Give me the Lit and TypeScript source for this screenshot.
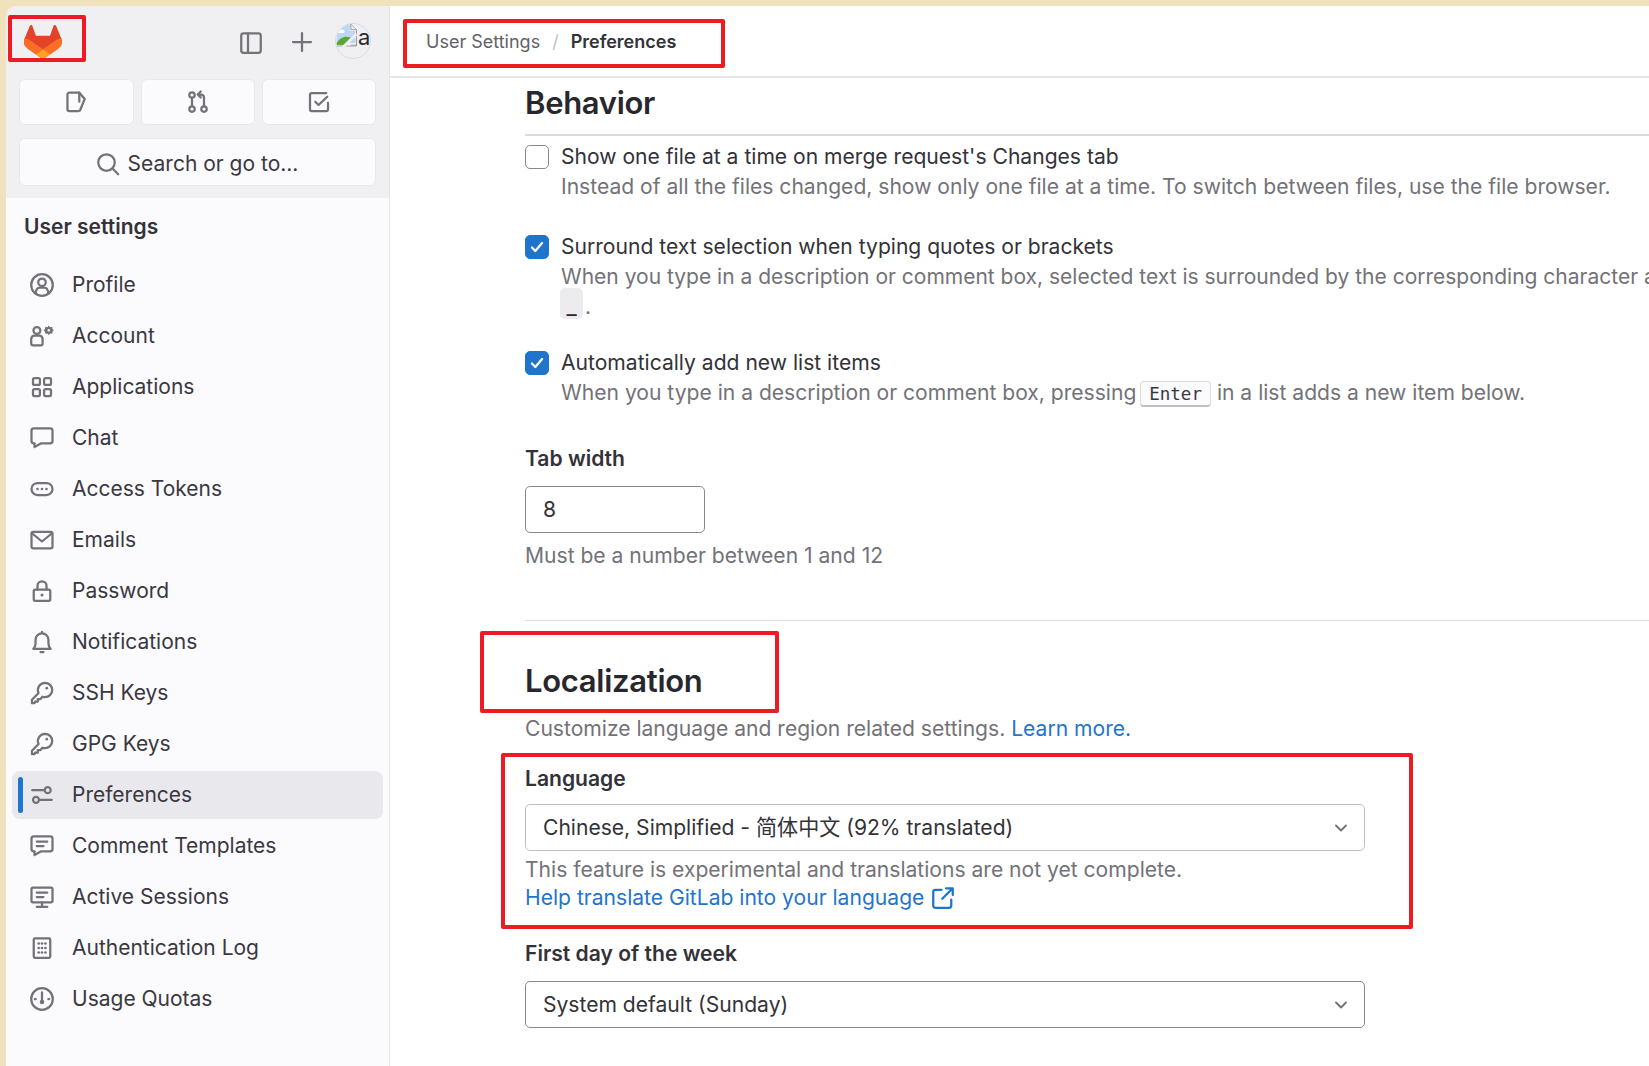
import { LitElement, html, css, svg } from "lit";
import { customElement } from "lit/decorators.js";

const ico = (body: unknown, cls = "ico") => html`<svg class=${cls} viewBox="0 0 16 16" fill="none" stroke="currentColor" stroke-width="1.5" stroke-linecap="round" stroke-linejoin="round">${body}</svg>`;

const icons: Record<string, unknown> = {
  profile: svg`<circle cx="8" cy="8" r="7.2"/><circle cx="8" cy="6.2" r="2.5"/><path d="M3.800 13.200c.3-2.200 1.600-3.400 2.700-3.400h3c1.100 0 2.400 1.200 2.700 3.400"/>`,
  account: svg`<circle cx="4.600" cy="4.300" r="2.300"/><path d="M.8 13v-2.800c0-1.400 1-2.400 2.400-2.400h2.800c1.400 0 2.400 1 2.400 2.400V13c0 .7-.5 1.200-1.200 1.200H2C1.300 14.200.8 13.700.8 13z"/><path fill="currentColor" stroke="none" d="M12.500 1l.9 1.100 1.400-.2.200 1.400.9.900-.9.900-.2 1.400-1.400-.2-.9 1.100-.9-1.100-1.400.2-.2-1.400-.9-.9.900-.9.200-1.400 1.400.2z"/><circle cx="12.500" cy="4.200" r=".8" fill="#fbfafd" stroke="none"/>`,
  apps: svg`<rect x="2" y="2" width="4.600" height="4.600" rx="1"/><rect x="9.400" y="2" width="4.600" height="4.600" rx="1"/><rect x="2" y="9.400" width="4.600" height="4.600" rx="1"/><rect x="9.400" y="9.400" width="4.600" height="4.600" rx="1"/>`,
  chat: svg`<path d="M2.500 1.500h11a1.500 1.500 0 0 1 1.500 1.500v7a1.500 1.500 0 0 1-1.500 1.500H7.500L3 14v-2.500h-.500A1.500 1.500 0 0 1 1 10V3a1.500 1.500 0 0 1 1.500-1.500z"/>`,
  token: svg`<rect x="1" y="4" width="14" height="8" rx="4"/><g fill="currentColor" stroke="none"><circle cx="5" cy="8" r=".9"/><circle cx="8" cy="8" r=".9"/><circle cx="11" cy="8" r=".9"/></g>`,
  mail: svg`<rect x="1" y="2.500" width="14" height="11" rx="1.200"/><path d="M1.300 3.500 8 9l6.700-5.500"/>`,
  lock: svg`<rect x="2.500" y="7" width="11" height="7.500" rx="1"/><path d="M5 7V4.500a3 3 0 0 1 6 0V7"/><circle cx="8" cy="10.700" r="1" fill="currentColor" stroke="none"/>`,
  bell: svg`<path d="M2.200 12.500c1.200-1 1.500-2 1.500-3.500V6.500a4.300 4.300 0 0 1 8.600 0V9c0 1.500.3 2.500 1.500 3.500z"/><path d="M7 14.700h2M8 1.300v.6"/>`,
  key: svg`<path d="M10 1.200a4.800 4.800 0 0 1 0 9.600c-.6 0-1.200-.1-1.700-.3L7 12H5.200v1.800H3.400L3 14.800H1.300v-2.300l4.400-4.500A4.800 4.800 0 0 1 10 1.200z"/><circle cx="11.200" cy="4.800" r=".9" fill="currentColor" stroke="none"/>`,
  prefs: svg`<circle cx="11.800" cy="4.800" r="2"/><path d="M1.500 4.800h8"/><circle cx="4" cy="11.200" r="2"/><path d="M6.500 11.200h8"/>`,
  comment: svg`<path d="M2.500 1.500h11a1.500 1.500 0 0 1 1.500 1.500v7a1.500 1.500 0 0 1-1.500 1.500H7.500L3 14v-2.500h-.500A1.500 1.500 0 0 1 1 10V3a1.500 1.500 0 0 1 1.500-1.500z"/><path d="M4.500 5h7M4.500 8h4.500"/>`,
  monitor: svg`<rect x="1" y="1.800" width="14" height="9.700" rx="1"/><path d="M4.500 5h7M4.500 8h4.500M8 11.500v3M4.500 14.500h7"/>`,
  log: svg`<rect x="2.500" y="1.500" width="11" height="13" rx=".8"/><g fill="currentColor" stroke="none"><circle cx="5.800" cy="5" r=".9"/><circle cx="5.800" cy="8" r=".9"/><circle cx="5.800" cy="11" r=".9"/><circle cx="8" cy="5" r=".9"/><circle cx="8" cy="8" r=".9"/><circle cx="8" cy="11" r=".9"/><circle cx="10.300" cy="5" r=".9"/><circle cx="10.300" cy="8" r=".9"/><circle cx="10.300" cy="11" r=".9"/></g>`,
  quota: svg`<circle cx="8" cy="8" r="7.200"/><path d="M8 3.500v6M3.200 8h.6M12.200 8h.6"/><circle cx="8" cy="10" r="1.500" fill="currentColor" stroke="none"/>`,
  panel: svg`<rect x="1.500" y="1.500" width="13" height="13" rx="1.500"/><path d="M6 1.500v13"/>`,
  plus: svg`<path d="M8 2v12M2 8h12"/>`,
  issue: svg`<path d="M3.500 1.800h6.700l3.600 4.200-3 7.300a1.200 1.200 0 0 1-1 .7H3.500a1.200 1.200 0 0 1-1.200-1.200V3a1.200 1.200 0 0 1 1.200-1.200z"/><path d="M10.200 1.800v6"/>`,
  mr: svg`<circle cx="4" cy="3.300" r="1.800"/><circle cx="4" cy="12.700" r="1.800"/><circle cx="12" cy="12.700" r="1.800"/><path d="M4 5.200v5.600M12 10.800V5a2 2 0 0 0-2-2H8M9.800 1 7.800 3l2 2"/>`,
  todo: svg`<path d="M14 8.500v4.300a1.200 1.200 0 0 1-1.200 1.200H3.200A1.200 1.200 0 0 1 2 12.800V3.200A1.200 1.200 0 0 1 3.200 2h9.600"/><path d="m5.500 7.800 2.200 2.200 5.800-5.500"/>`,
  search: svg`<circle cx="7" cy="7" r="5.500"/><path d="m11.200 11.200 3.600 3.600"/>`,
  chev: svg`<path d="m4 6 4 4 4-4"/>`,
  ext: svg`<path d="M7 2.500H3a1.500 1.500 0 0 0-1.500 1.500v9A1.500 1.500 0 0 0 3 14.500h9a1.500 1.500 0 0 0 1.500-1.500V9"/><path d="M10 1.500h4.500V6M14.300 1.700 7.500 8.500"/>`,
};

const nav: [string, string][] = [
  ["profile", "Profile"], ["account", "Account"], ["apps", "Applications"], ["chat", "Chat"],
  ["token", "Access Tokens"], ["mail", "Emails"], ["lock", "Password"], ["bell", "Notifications"],
  ["key", "SSH Keys"], ["key", "GPG Keys"], ["prefs", "Preferences"], ["comment", "Comment Templates"],
  ["monitor", "Active Sessions"], ["log", "Authentication Log"], ["quota", "Usage Quotas"],
];

@customElement("app-root")
export class AppRoot extends LitElement {
  static styles = css`
    :host { display: block; }
    * { box-sizing: border-box; }
    .page { position: relative; width: 1649px; height: 1066px; overflow: hidden; background: #efe2bd; padding: 6px 0 0 6px; display: flex; font-family: Inter, "Noto Sans CJK SC", sans-serif; font-size: 21px; line-height: 30px; color: #3a383f; }
    .side { width: 384px; flex: none; background: #fbfafd; border-right: 1px solid #e4e4e7; border-top-left-radius: 10px; overflow: hidden; }
    .top { background: #f0f0f3; height: 192px; padding: 0 13px; }
    .bar { height: 73px; display: flex; align-items: center; padding: 0 5px; color: #737278; }
    .logo { width: 38px; height: 34px; flex: none; margin-top: -1px; }
    .panel { width: 24px; height: 24px; margin-left: auto; }
    .plus { width: 24px; height: 24px; margin: -1px 0 0 27px; }
    .bar .ico { width: 24px; height: 24px; }
    .avatar { width: 36px; height: 36px; margin: -4px 0 0 21px; border-radius: 50%; border: 1px solid #dcdcde; overflow: hidden; flex: none; display: flex; color: #28272d; font-size: 22px; line-height: 26px; }
    .avatar svg { width: 22px; height: 24px; flex: none; margin-left: -1px; margin-top: -1px; }
    .avatar span { margin-left: 1px; }
    .btns { display: grid; grid-template-columns: 114.500px 114px 114.500px; justify-content: space-between; }
    .btn { height: 46px; background: #fbfafd; border: 1px solid #e9e9ec; border-radius: 6px; display: flex; align-items: center; justify-content: center; color: #737278; }
    .btn .ico { width: 24px; height: 24px; }
    .search { margin-top: 13px; height: 48px; padding: 3px 1px 0 0; gap: 8px; color: #3a383f; font-size: 21px; }
    .search .ico { color: #737278; }
    .title { margin: 14px 0 19px 18px; font-weight: 600; color: #333238; }
    .nav { padding: 0 6px; display: flex; flex-direction: column; gap: 3px; }
    .item { position: relative; height: 48px; border-radius: 8px; padding-left: 18px; display: flex; align-items: center; gap: 18px; white-space: nowrap; }
    .item .ico { width: 24px; height: 24px; flex: none; color: #737278; }
    .item.on { background: #e9e9ed; }
    .item.on::before { content: ""; position: absolute; left: 6px; top: 6px; width: 5px; height: 36px; border-radius: 3px; background: #1f75cb; }
    .main { flex: 1; min-width: 0; background: #fff; }
    .crumbs { height: 72px; border-bottom: 2px solid #e6e6e8; padding: 2px 0 0 36px; display: flex; align-items: center; gap: 12px; font-size: 18px; color: #626168; }
    .crumbs b { font-weight: 600; color: #333238; }
    .crumbs i { font-style: normal; color: #bfbfc3; }
    .content { padding-left: 135px; white-space: nowrap; font-size: 21.080px; }
    h2 { margin: 0; font-size: 31px; line-height: 50px; font-weight: 600; color: #28272d; letter-spacing: -.3px; }
    .rule { height: 2px; background: #dcdcde; margin: 6px 0 6px; }
    .row { position: relative; padding-left: 36px; color: #333238; }
    .row + .row { margin-top: 30px; }
    .row.third { margin-top: 26px; }
    .muted { color: #737278; }
    .muted.long { font-size: 21px; }
    .box { position: absolute; left: 0; top: 3px; width: 24px; height: 24px; border-radius: 5px; border: 1.500px solid #89888d; background: #fff; display: flex; align-items: center; justify-content: center; }
    .box.on { background: #1f75cb; border-color: #1f75cb; color: #fff; }
    .box svg { width: 18px; height: 18px; }
    code { display: inline-block; width: 23px; height: 31px; line-height: 36px; margin: -4px 2px 0 -1px; background: #ececef; border-radius: 5px; text-align: center; font-family: "DejaVu Sans Mono", monospace; font-size: 17px; font-weight: 700; color: #28272d; vertical-align: top; }
    kbd { display: inline-block; height: 26px; line-height: 25px; padding: 0 8px; background: #fbfafd; border: 1px solid #dcdcde; border-bottom: 2px solid #bfbfc3; border-radius: 4px; font-family: "DejaVu Sans Mono", monospace; font-size: 17.500px; color: #3a383f; margin: 0 0 0 -2px; vertical-align: 0; }
    .lab { font-weight: 600; color: #333238; }
    .tab { margin-top: 36px; }
    .input { width: 180px; height: 47px; margin-top: 12px; border: 1.500px solid #89888d; border-radius: 5px; padding-left: 17px; display: flex; align-items: center; color: #333238; }
    .hint { margin-top: 8px; }
    .rule2 { height: 1px; background: #dcdcde; margin-top: 49px; }
    .loc { margin-top: 35px; }
    .after { margin-top: 8px; }
    a { color: #1f75cb; text-decoration: none; }
    .lang { margin-top: 20px; }
    .sel { width: 840px; height: 47px; margin-top: 12px; border: 1.500px solid #89888d; border-radius: 5px; padding: 0 13px 0 17px; display: flex; align-items: center; justify-content: space-between; color: #333238; }
    .sel.light { border-color: #bfbfc3; margin-top: 10px; }
    .sel .ico { width: 20px; height: 20px; color: #737278; }
    .note { margin-top: 5px; line-height: 28px; }
    .link { display: flex; align-items: center; gap: 7px; line-height: 28px; }
    .link .ico { width: 24px; height: 24px; color: #1f75cb; }
    .first { margin-top: 27px; }
    .mark { position: absolute; border: 4px solid #ed1c24; border-radius: 2px; pointer-events: none; }
    .m1 { left: 8px; top: 15px; width: 78px; height: 47px; }
    .m2 { left: 403px; top: 19px; width: 322px; height: 49px; }
    .m3 { left: 480px; top: 631px; width: 299px; height: 82px; }
    .m4 { left: 501px; top: 753px; width: 912px; height: 176px; }
  `;

  render() {
    const check = html`<svg viewBox="0 0 16 16" fill="none" stroke="currentColor" stroke-width="2" stroke-linecap="round" stroke-linejoin="round"><path d="m3.500 8.500 3 3 6-7"/></svg>`;
    return html`
      <div class="page">
        <aside class="side">
          <div class="top">
            <div class="bar">
              <svg class="logo" viewBox="0 0 25 24" preserveAspectRatio="none"><path fill="#E24329" d="m24.507 9.5-.034-.09L21.082.562a.896.896 0 0 0-1.694.091l-2.29 7.01H7.825L5.535.653a.898.898 0 0 0-1.694-.09L.451 9.411.416 9.5a6.297 6.297 0 0 0 2.09 7.278l.012.01.03.022 5.16 3.867 2.56 1.935 1.554 1.176a1.051 1.051 0 0 0 1.268 0l1.555-1.176 2.56-1.935 5.197-3.89.014-.01A6.297 6.297 0 0 0 24.507 9.5Z"/><path fill="#FC6D26" d="m24.507 9.5-.034-.09a11.44 11.44 0 0 0-4.56 2.051l-7.447 5.632 4.742 3.584 5.197-3.89.014-.01A6.297 6.297 0 0 0 24.507 9.5Z"/><path fill="#FCA326" d="m7.707 20.677 2.56 1.935 1.555 1.176a1.051 1.051 0 0 0 1.268 0l1.555-1.176 2.56-1.935-4.743-3.584-4.755 3.584Z"/><path fill="#FC6D26" d="M5.01 11.461a11.43 11.43 0 0 0-4.56-2.05L.416 9.5a6.297 6.297 0 0 0 2.09 7.278l.012.01.03.022 5.16 3.867 4.745-3.584-7.444-5.632Z"/></svg>
              <div class="panel">${ico(icons.panel)}</div>
              <div class="plus">${ico(icons.plus)}</div>
              <div class="avatar">
                <svg viewBox="0 0 23 24"><path d="M.5.500h16l6 6v17H.5z" fill="#fff" stroke="#9a9a9e"/><path d="M16.500.500v6h6" fill="#e8e8ea" stroke="#9a9a9e"/><path d="M1.500 1.500h14v6h6v13H1.500z" fill="#bcd6f3"/><path d="M3 6.500h6a2 2 0 0 1 0 3.500H3z" fill="#fff"/><path d="M1.500 21c3-6 10-9 15-6l-4 7.500H1.500z" fill="#5aa832"/><path d="M8 25 22.500 11" stroke="#f0f0f3" stroke-width="3"/><path d="M16 22.500h6.500v-6" fill="none" stroke="#9a9a9e"/></svg>
                <span>a</span>
              </div>
            </div>
            <div class="btns">
              <div class="btn">${ico(icons.issue)}</div>
              <div class="btn">${ico(icons.mr)}</div>
              <div class="btn">${ico(icons.todo)}</div>
            </div>
            <div class="btn search">${ico(icons.search)}<span>Search or go to...</span></div>
          </div>
          <div class="title">User settings</div>
          <nav class="nav">
            ${nav.map(([i, t]) => html`<div class="item ${t === "Preferences" ? "on" : ""}">${ico(icons[i])}<span>${t}</span></div>`)}
          </nav>
        </aside>
        <main class="main">
          <div class="crumbs"><span>User Settings</span><i>/</i><b>Preferences</b></div>
          <div class="content">
            <h2>Behavior</h2>
            <div class="rule"></div>
            <div class="row"><span class="box"></span>Show one file at a time on merge request's Changes tab
              <div class="muted">Instead of all the files changed, show only one file at a time. To switch between files, use the file browser.</div></div>
            <div class="row"><span class="box on">${check}</span>Surround text selection when typing quotes or brackets
              <div class="muted long">When you type in a description or comment box, selected text is surrounded by the corresponding character after typing an opening</div>
              <div class="muted"><code>_</code>.</div></div>
            <div class="row third"><span class="box on">${check}</span>Automatically add new list items
              <div class="muted">When you type in a description or comment box, pressing <kbd>Enter</kbd> in a list adds a new item below.</div></div>
            <div class="lab tab">Tab width</div>
            <div class="input">8</div>
            <div class="muted hint">Must be a number between 1 and 12</div>
            <div class="rule2"></div>
            <h2 class="loc">Localization</h2>
            <div class="muted after">Customize language and region related settings. <a>Learn more.</a></div>
            <div class="lab lang">Language</div>
            <div class="sel light"><span>Chinese, Simplified - 简体中文 (92% translated)</span>${ico(icons.chev)}</div>
            <div class="muted note">This feature is experimental and translations are not yet complete.</div>
            <a class="link">Help translate GitLab into your language ${ico(icons.ext)}</a>
            <div class="lab first">First day of the week</div>
            <div class="sel"><span>System default (Sunday)</span>${ico(icons.chev)}</div>
          </div>
        </main>
        <div class="mark m1"></div>
        <div class="mark m2"></div>
        <div class="mark m3"></div>
        <div class="mark m4"></div>
      </div>
    `;
  }
}
